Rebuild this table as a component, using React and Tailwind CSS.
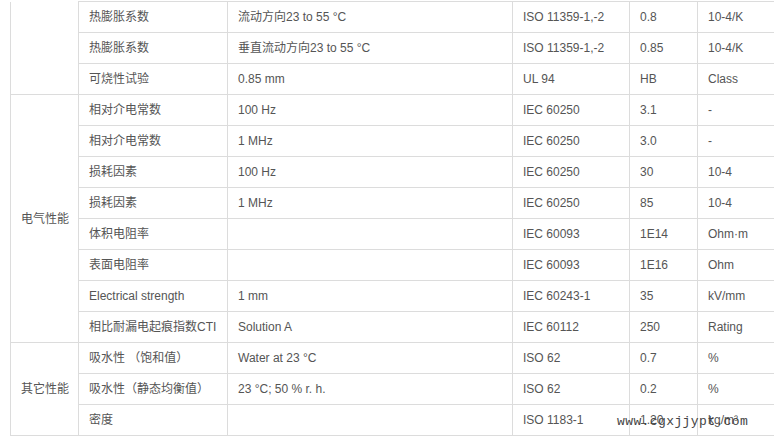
const groups = [
  {
    label: '',
    cut: true,
    rows: [
      ['热膨胀系数', '流动方向23 to 55 °C', 'ISO 11359-1,-2', '0.8', '10-4/K'],
      ['热膨胀系数', '垂直流动方向23 to 55 °C', 'ISO 11359-1,-2', '0.85', '10-4/K'],
      ['可烧性试验', '0.85 mm', 'UL 94', 'HB', 'Class'],
    ],
  },
  {
    label: '电气性能',
    rows: [
      ['相对介电常数', '100 Hz', 'IEC 60250', '3.1', '-'],
      ['相对介电常数', '1 MHz', 'IEC 60250', '3.0', '-'],
      ['损耗因素', '100 Hz', 'IEC 60250', '30', '10-4'],
      ['损耗因素', '1 MHz', 'IEC 60250', '85', '10-4'],
      ['体积电阻率', '', 'IEC 60093', '1E14', 'Ohm·m'],
      ['表面电阻率', '', 'IEC 60093', '1E16', 'Ohm'],
      ['Electrical strength', '1 mm', 'IEC 60243-1', '35', 'kV/mm'],
      ['相比耐漏电起痕指数CTI', 'Solution A', 'IEC 60112', '250', 'Rating'],
    ],
  },
  {
    label: '其它性能',
    rows: [
      ['吸水性 （饱和值）', 'Water at 23 °C', 'ISO 62', '0.7', '%'],
      ['吸水性（静态均衡值）', '23 °C; 50 % r. h.', 'ISO 62', '0.2', '%'],
      ['密度', '', 'ISO 1183-1', '1.20', 'kg/m³'],
    ],
  },
];

const cell = 'border border-[#dcdcdc] h-[31px] px-[10px] py-0 text-left align-middle whitespace-nowrap';

export default function App() {
  return (
    <div
      className="relative w-[774px] h-[443px] overflow-hidden bg-white text-[12px] text-[#555]"
      style={{ fontFamily: '"Liberation Sans", "Noto Sans CJK SC", sans-serif' }}
    >
      <table className="ml-[10px] mt-px border-collapse table-fixed w-[766px]">
        <colgroup>
          <col className="w-[68px]" />
          <col className="w-[149px]" />
          <col className="w-[285px]" />
          <col className="w-[117px]" />
          <col className="w-[68px]" />
          <col className="w-[79px]" />
        </colgroup>
        <tbody>
          {groups.map((g, gi) =>
            g.rows.map((r, ri) => (
              <tr key={`${gi}-${ri}`}>
                {ri === 0 && (
                  <td
                    rowSpan={g.rows.length}
                    className={`${cell} text-center ${g.cut ? 'border-t-0' : ''}`}
                  >
                    {g.label}
                  </td>
                )}
                {r.map((v, ci) => (
                  <td key={ci} className={cell}>
                    {v}
                  </td>
                ))}
              </tr>
            ))
          )}
        </tbody>
      </table>
      {/* site watermark */}
      <div
        className="absolute left-[617px] top-[412px] text-[13px] text-[#444] tracking-[0.4px] pointer-events-none"
        style={{ fontFamily: '"Liberation Mono", monospace' }}
      >
        www.cgxjjypt.com
      </div>
    </div>
  );
}
